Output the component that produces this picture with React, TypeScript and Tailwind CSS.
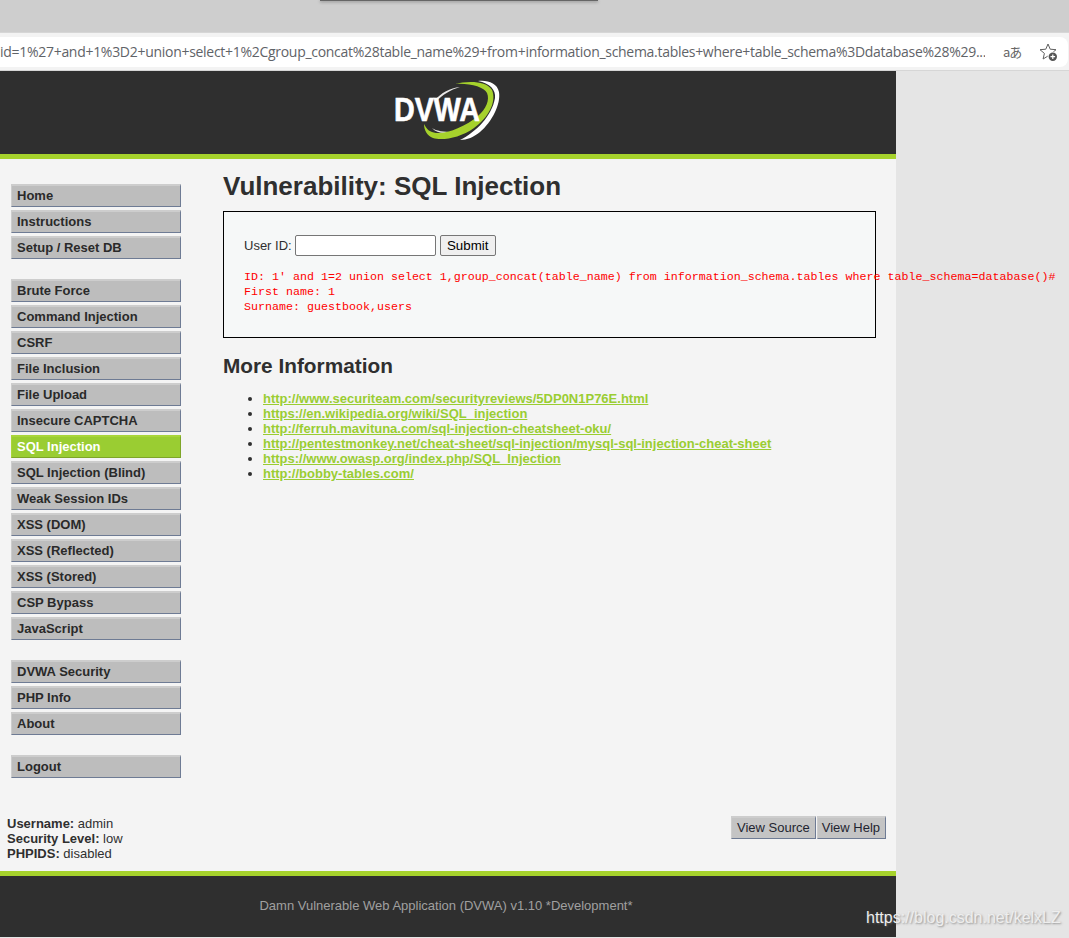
const groups = [
  ["Home", "Instructions", "Setup / Reset DB"],
  ["Brute Force", "Command Injection", "CSRF", "File Inclusion", "File Upload", "Insecure CAPTCHA", "SQL Injection", "SQL Injection (Blind)", "Weak Session IDs", "XSS (DOM)", "XSS (Reflected)", "XSS (Stored)", "CSP Bypass", "JavaScript"],
  ["DVWA Security", "PHP Info", "About"],
  ["Logout"],
];

const links = [
  "http://www.securiteam.com/securityreviews/5DP0N1P76E.html",
  "https://en.wikipedia.org/wiki/SQL_injection",
  "http://ferruh.mavituna.com/sql-injection-cheatsheet-oku/",
  "http://pentestmonkey.net/cheat-sheet/sql-injection/mysql-sql-injection-cheat-sheet",
  "https://www.owasp.org/index.php/SQL_Injection",
  "http://bobby-tables.com/",
];

function Logo() {
  return (
    <svg width="110" height="64" viewBox="0 0 110 64" className="block">
      <path d="M41 20 C47 13 56 8 66 7 C56 10 48 15 43 21 Z" fill="#e8e8e8" />
      <path d="M38 48 C42 51 50 52 59 52 C50 54 42 53 38 48 Z" fill="#e8e8e8" />
      <path d="M61 4 C72 1 92 0 98 10 C103 22 94 38 80 48 C66 58 48 61 39 58 C33 56 30 50 30 44 C33 50 36 52 42 53 C54 54 72 46 84 36 C92 29 96 20 93 13 C90 7 76 3 61 4 Z" fill="#a6d22c" />
      <path d="M84 1 C94 0 103 3 105 12 C107 24 98 42 86 52 C80 57 73 60 66 60 C82 52 98 36 101 18 C102 10 96 3 84 1 Z" fill="#ffffff" />
      <text x="0" y="41" fontFamily="'Liberation Sans', sans-serif" fontWeight="700" fontSize="33" fill="#ffffff" stroke="#ffffff" strokeWidth="0.6" textLength="86" lengthAdjust="spacingAndGlyphs">DVWA</text>
    </svg>
  );
}

function StarPlus() {
  return (
    <svg width="20" height="20" viewBox="0 0 20 20" fill="none" className="block">
      <path d="M9 2 L11.2 7.2 L17 7.7 L12.6 11.4 L13.9 17 L9 14 L4.1 17 L5.4 11.4 L1 7.7 L6.8 7.2 Z" stroke="#5f5f5f" strokeWidth="1" strokeLinejoin="round" />
      <circle cx="13.8" cy="14.7" r="5.2" fill="#ffffff" />
      <circle cx="13.8" cy="14.7" r="4.2" fill="#555555" />
      <path d="M13.8 12.4 V17 M11.5 14.7 H16.1" stroke="#ffffff" strokeWidth="1.2" />
    </svg>
  );
}

const bevel = "border-t-2 border-l border-r border-b border-t-[#cdcdcd] border-l-[#cdcdcd] border-r-[#6e7b94] border-b-[#6e7b94]";

export default function App() {
  return (
    <div className="relative h-[938px] w-[1069px] overflow-hidden bg-[#e5e5e5] font-['Liberation_Sans',Arial,sans-serif] text-[13px] text-[#2f2f2f]">
      <div className="flex h-[32px] bg-[#cecece] pl-[320px]">
        <div className="h-[1px] w-[278px] bg-[#666666] shadow-[0_1px_3px_rgba(0,0,0,0.5)]" />
      </div>
      <div className="flex h-[39px] items-center border-t border-b border-[#d6d6d6] bg-[#f3f3f3] pr-[1px]">
        <div className="flex h-[30px] w-full items-center overflow-hidden rounded-r-[8px] bg-white">
          <span className="w-[985px] shrink-0 overflow-hidden whitespace-nowrap font-['Open_Sans',sans-serif] text-[14px] tracking-[-0.29px] text-[#5f6368]">
            id=1%27+and+1%3D2+union+select+1%2Cgroup_concat%28table_name%29+from+information_schema.tables+where+table_schema%3Ddatabase%28%29...
          </span>
          <span className="ml-[18px] w-[18px] shrink-0 whitespace-nowrap font-['Noto_Sans_CJK_JP',sans-serif] text-[13px] tracking-[-1px] text-[#666666]">aあ</span>
          <span className="ml-[18px] shrink-0"><StarPlus /></span>
        </div>
      </div>

      <div className="flex h-[866px] w-[896px] flex-col bg-[#f4f4f4]">
        <header className="flex h-[88px] shrink-0 items-center justify-center border-b-[5px] border-[#a6d22c] bg-[#2f2f2f] pl-[2px] pb-[1px]">
          <Logo />
        </header>

        <div className="flex min-h-0 flex-1">
          <nav className="w-[223px] shrink-0 pl-[11px] pt-[25px]">
            <div className="flex flex-col gap-[20px]">
              {groups.map((g, i) => (
                <div key={i} className="flex w-[170px] flex-col gap-[3px]">
                  {g.map((item) => {
                    const active = item === "SQL Injection";
                    return (
                      <div
                        key={item}
                        className={
                          "flex h-[23px] items-center border-t-2 border-b border-l border-r pl-[5px] text-[13px] leading-[16px] font-bold " +
                          (active
                            ? "border-t-[#a9d53a] border-l-[#a9d53a] border-r-[#7ea528] border-b-[#7ea528] bg-[#9acd32] text-white"
                            : "border-t-[#cdcdcd] border-l-[#cdcdcd] border-r-[#6e7b94] border-b-[#6e7b94] bg-[#bdbdbd] text-[#2a2a2a]")
                        }
                      >
                        {item}
                      </div>
                    );
                  })}
                </div>
              ))}
            </div>
          </nav>

          <main className="w-[653px] shrink-0 pt-[12px]">
            <h1 className="text-[26px] leading-[30px] font-bold text-[#2f2f2f]">Vulnerability: SQL Injection</h1>
            <div className="mt-[10px] h-[127px] border border-black bg-[#f6f8f8] pl-[20px] pt-[23px]">
              <div className="flex h-[21px] items-center">
                <span>User ID:</span>
                <input className="ml-[3px] h-[21px] w-[141px] rounded-[2px] border border-[#767676] bg-white" />
                <button className="ml-[4px] h-[21px] w-[56px] rounded-[2px] border border-[#767676] bg-[#efefef] text-[13.33px] text-black">Submit</button>
              </div>
              <pre className="mt-[14px] whitespace-pre font-['Liberation_Mono',monospace] text-[11.67px] leading-[15px] text-[#ff0000]">{"ID: 1' and 1=2 union select 1,group_concat(table_name) from information_schema.tables where table_schema=database()#\nFirst name: 1\nSurname: guestbook,users"}</pre>
            </div>
            <h2 className="mt-[15px] text-[20.8px] leading-[26px] font-bold text-[#2f2f2f]">More Information</h2>
            <ul className="mt-[12px] list-disc pl-[40px]">
              {links.map((l) => (
                <li key={l} className="h-[15px] text-[13px] leading-[15px]">
                  <a href="#" className="font-bold text-[#9acd32] underline">{l}</a>
                </li>
              ))}
            </ul>
          </main>
        </div>

        <div className="flex h-[70px] shrink-0 items-start justify-between pl-[7px] pr-[10px] text-[13px] leading-[15px]">
          <div className="pt-[15px]">
            <div><b>Username:</b> admin</div>
            <div><b>Security Level:</b> low</div>
            <div><b>PHPIDS:</b> disabled</div>
          </div>
          <div className="flex gap-[1px] pt-[15px]">
            <div className={"flex h-[23px] items-center bg-[#c4c4c4] pl-[5px] pr-[5px] pb-[2px] text-[#1f2430] " + bevel}>View Source</div>
            <div className={"flex h-[23px] items-center bg-[#c4c4c4] pl-[4px] pr-[5px] pb-[2px] text-[#1f2430] " + bevel}>View Help</div>
          </div>
        </div>

        <footer className="flex h-[66px] shrink-0 items-center justify-center border-t-[5px] border-[#a6d22c] bg-[#2f2f2f] pb-[1px] pr-[4px] text-[13px] text-[#a0a0a0]">
          Damn Vulnerable Web Application (DVWA) v1.10 *Development*
        </footer>
      </div>

      <div className="absolute left-[866px] top-[908px] text-[16px] leading-[20px] whitespace-nowrap text-[#eeeeee] [text-shadow:1px_1px_2px_rgba(110,110,110,0.7)]">
        https://blog.csdn.net/kelxLZ
      </div>
    </div>
  );
}
